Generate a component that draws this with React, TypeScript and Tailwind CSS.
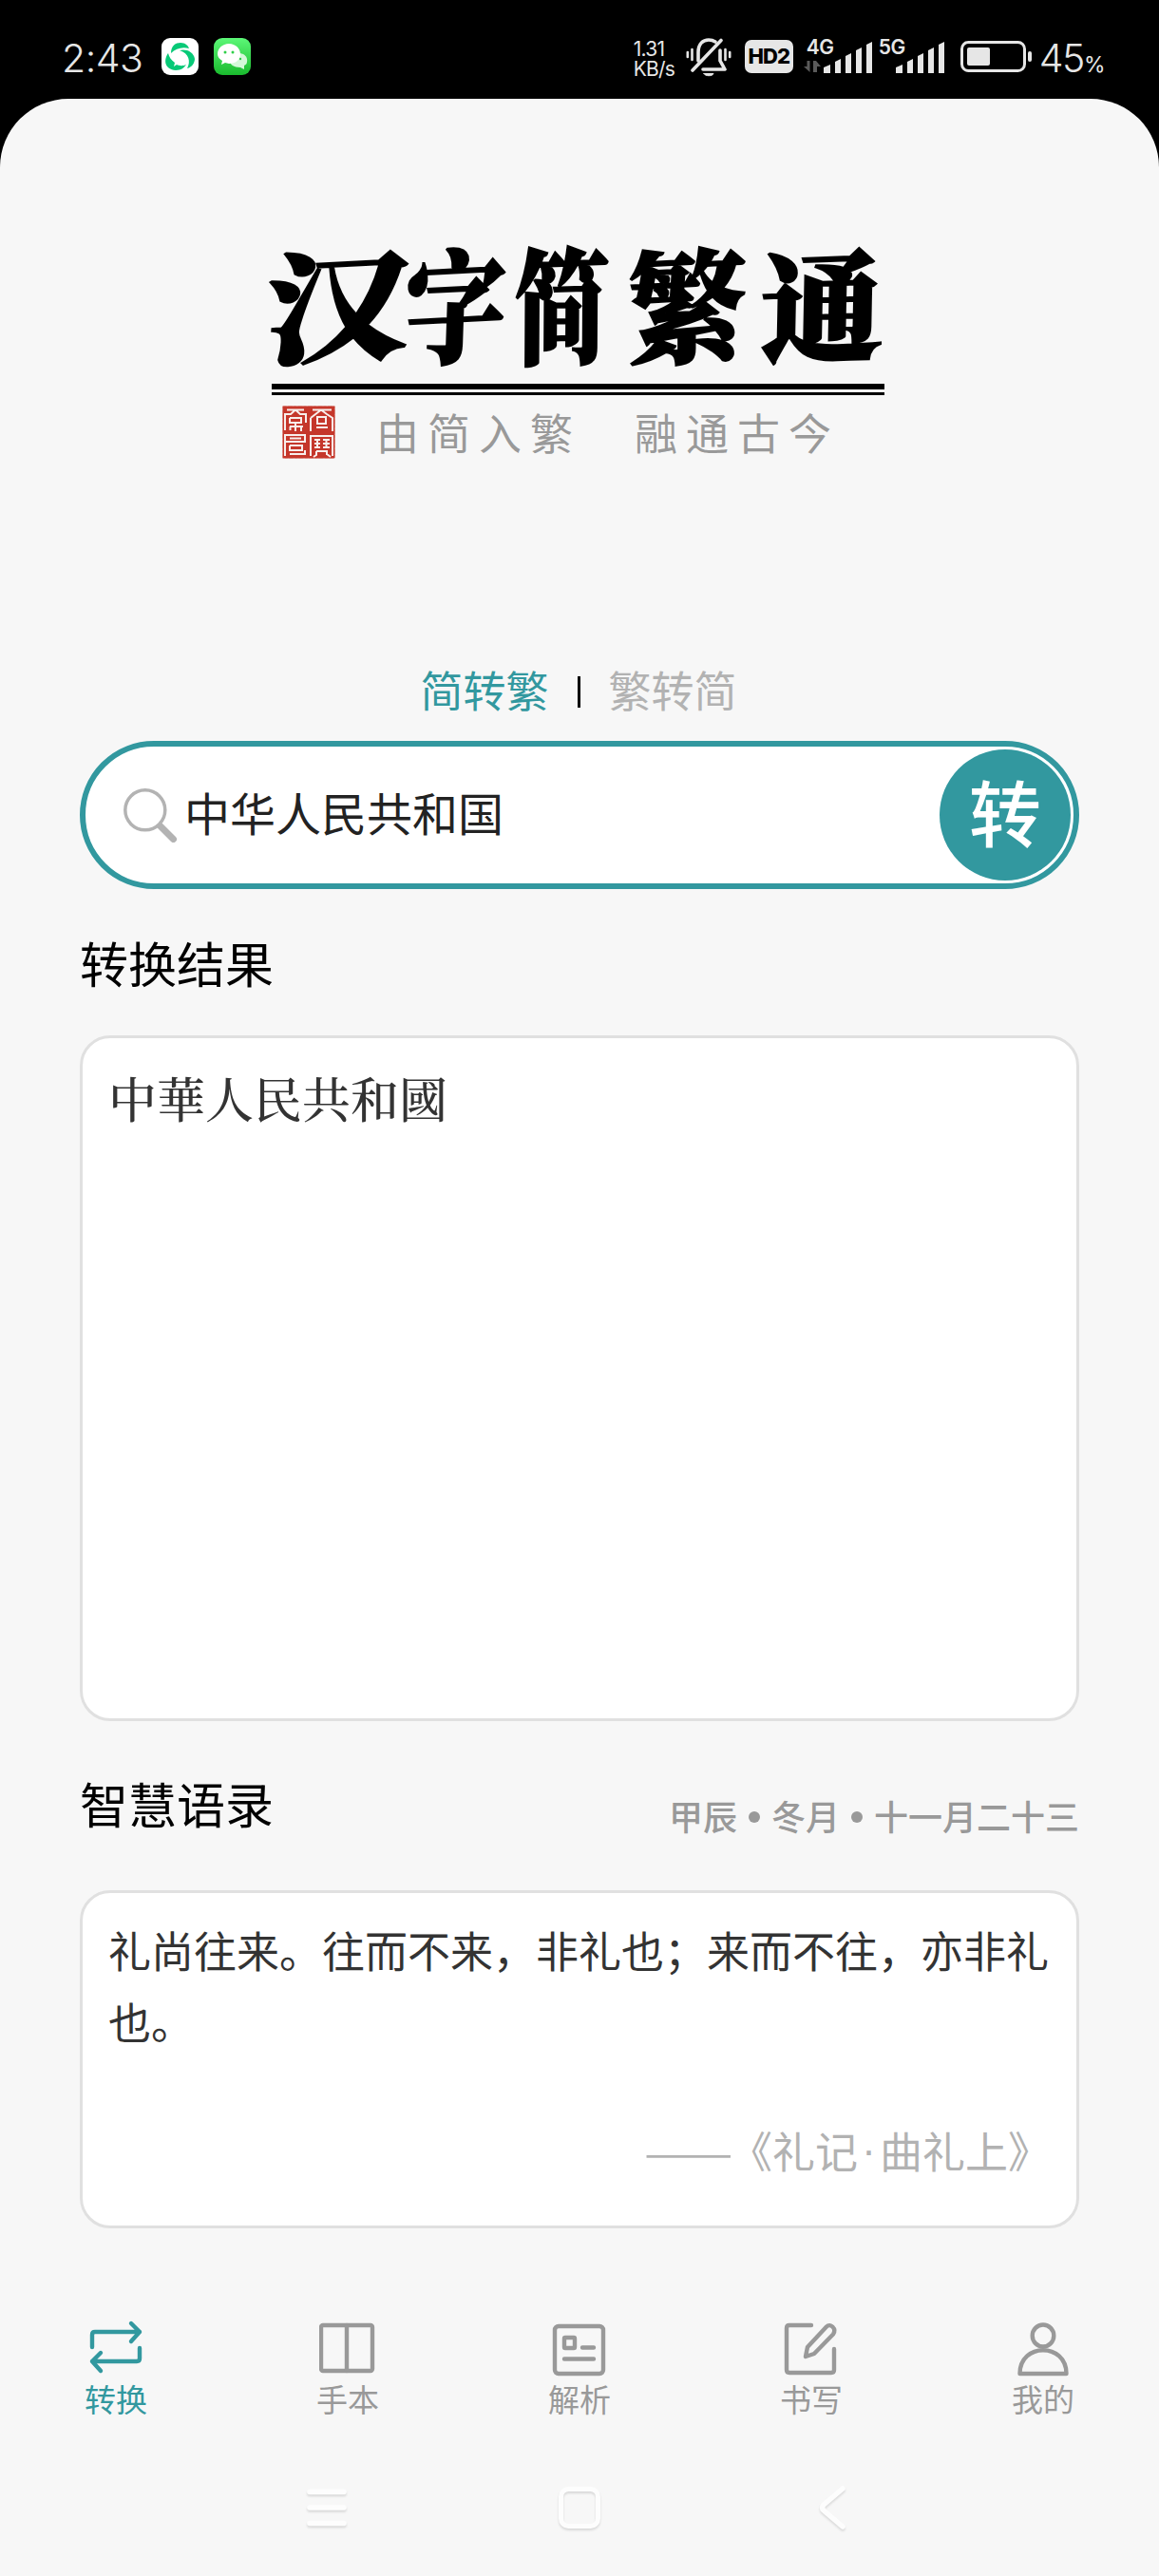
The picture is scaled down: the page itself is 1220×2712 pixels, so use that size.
import type { ReactNode } from "react";

const cjkSans = "font-['Noto_Sans_CJK_SC',sans-serif]";
const cjkSerif = "font-['Noto_Serif_CJK_SC','Noto_Sans_CJK_TC',serif]";

const logoChars = [
  { char: "汉", className: "w-[139px] scale-x-[1.2] -skew-x-6 -rotate-3" },
  { char: "字", className: "w-[110px] scale-x-[0.84] scale-y-[1.02] -skew-x-6 -rotate-3" },
  { char: "简", className: "w-[113px] scale-x-[0.8] scale-y-[1.04] -skew-x-3 -rotate-2" },
  { char: "繁", className: "w-[151px] scale-x-[0.98] scale-y-[1.02] -skew-x-3 -rotate-3" },
  { char: "通", className: "w-[134px] scale-x-[1.03] -skew-x-3 -rotate-2" },
];

function StatusBar() {
  return (
    <header className="flex h-[104px] items-start pt-[40px] pl-[65px] pr-[58px] font-[Inter,sans-serif] text-[#e6e6e6]">
      <span className="w-[105px] pt-px text-[41px] font-[350] leading-[40px] tracking-[-0.5px]">2:43</span>
      <svg className="h-[39px] w-[39px]" viewBox="0 0 39 39">
        <rect width="39" height="39" rx="9" fill="#fff" />
        <path d="M10 16C10 8 15 5 20 5c5 0 8 3 9 6-7-2-14 0-19 5Z" fill="#07c977" />
        <path d="M7 16c-5 7-4 17 8 18 6 0 9-3 11-6-4 2-8 1-10 0l-3 2 1-4c-4-3-6-6-7-10Z" fill="#07c977" />
        <path d="M19 13c6-2 15 1 16 9 0 4-3 9-8 10 4-7 2-16-8-19Z" fill="#07c977" />
      </svg>
      <svg className="ml-[16px] h-[39px] w-[39px]" viewBox="0 0 39 39">
        <defs>
          <linearGradient id="chat" x1="0" y1="0" x2="0" y2="1">
            <stop offset="0" stopColor="#5cf777" />
            <stop offset="1" stopColor="#1abb2e" />
          </linearGradient>
        </defs>
        <rect width="39" height="39" rx="9" fill="url(#chat)" />
        <path d="M26 16c6 0 10 4 9 9 0 2-1 3-3 4v4l-4-2c-7 0-11-3-11-7 0-5 4-8 9-8Z" fill="#d5f8d9" />
        <path d="M16 6c7 0 12 5 12 11s-5 10-12 10l-4-1-4 2 1-4c-3-2-5-4-5-7C4 11 9 6 16 6Z" fill="#fff" />
        <circle cx="12" cy="15" r="1.5" fill="#2fcf48" />
        <circle cx="20" cy="15" r="1.5" fill="#2fcf48" />
        <circle cx="28" cy="22" r="1.2" fill="#2fcf48" />
      </svg>

      <div className="ml-auto flex items-start">
        <div className="w-[55px] pt-px text-[21px] leading-[21px] tracking-[-0.8px]">
          <div>1.31</div>
          <div>KB/s</div>
        </div>
        <svg className="h-[41px] w-[48px]" viewBox="0 0 48 41" fill="none" stroke="#e6e6e6" strokeWidth="3.6" strokeLinecap="round" strokeLinejoin="round">
          <path d="M7 34 37 2.500" />
          <path d="M13 24V15C13 6 18 2 24 2c3 0 5 .7 7 2" />
          <path d="M36 13v11l5 9H18" />
          <path d="M19 37.500h10c-1 3-9 3-10 0Z" fill="#e6e6e6" strokeWidth="1" />
          <path d="M1.800 15v5M6.500 12v11M41.500 12v11M46.200 15v5" strokeWidth="2.600" />
        </svg>
        <span className="ml-[14px] mt-[2px] flex h-[35px] w-[51px] items-center justify-center rounded-[7px] bg-[#e6e6e6] text-[22px] font-extrabold tracking-[-1px] text-black">
          HD2
        </span>
        <SignalBars label="4G" className="ml-[14px] w-[74px]" arrows />
        <SignalBars label="5G" className="ml-[2px] w-[74px]" />
        <svg className="ml-[12px] mt-[3px] h-[34px] w-[77px]" viewBox="0 0 77 34">
          <rect x="1.500" y="1.500" width="66" height="30" rx="7" fill="none" stroke="#e6e6e6" strokeWidth="3" />
          <rect x="7" y="7" width="24" height="19" rx="2" fill="#e6e6e6" />
          <rect x="71" y="11" width="4" height="11" rx="2" fill="#e6e6e6" />
        </svg>
        <span className="ml-[6px] pt-px text-[41px] font-[350] leading-[40px] tracking-[-1.5px]">
          45<span className="text-[23px] font-normal">%</span>
        </span>
      </div>
    </header>
  );
}

function SignalBars({ label, className, arrows = false }: { label: string; className: string; arrows?: boolean }) {
  return (
    <div className={`relative h-[40px] ${className}`}>
      <span className="absolute left-0 top-0 text-[21px] font-semibold leading-[20px] tracking-[-0.5px]">{label}</span>
      <svg className="h-[40px] w-[74px] overflow-visible" viewBox="0 0 74 40" fill="#e6e6e6">
        {arrows && <path d="M3.500 36-3 30h3.500v-6h3ZM7 36V24h3l5 6h-4v6Z" fill="#5a5a5a" />}
        <path d="M18 37v-6l7-3v9Z" />
        <path d="M30 37V25l6-3v15Z" />
        <path d="M41 37V19l6-3v21Z" />
        <path d="M52 37V13l6-3v27Z" />
        <path d="M63 37V7l6-3v33Z" />
      </svg>
    </div>
  );
}

function Seal() {
  return (
    <svg className="h-[56px] w-[56px]" viewBox="0 0 56 56" fill="none">
      <rect x=".5" y=".5" width="55" height="55" rx="1" fill="#c5372b" stroke="#d9847b" strokeDasharray="3 1.500 5 1" />
      <g stroke="#f8efec" strokeWidth="2">
        <path d="M5 4.500h18M14 4.500 9 9H3v17M14 4.500 19 9h6v9M8 13h12v5H8v-5M8 22h14M14 18v9M8.500 22v4M20 22v5" />
        <path d="M32 4.500h20M41 4.500 30 13M41 4.500 47 9l6 4v14M30 13v14M37 12h9v7h-9zM36 23h12" />
        <path d="M3 53V31h21v7H4M8 34.500h12M8 42h13v5H8v-5M8 51h16v-4" />
        <path d="M30 53V32h23v21M34 36h6M34 40h6M34 44h6M37 35v10M43 36h7M43 40h7M43 44h7M46.500 35v10M36 48h11v4M36 48v4l-3 2M47 51l4 3" />
      </g>
    </svg>
  );
}

function Logo() {
  return (
    <div className="mx-auto mt-[142px] w-[648px]">
      <div className={`flex h-[158px] items-start whitespace-nowrap pt-[6px] text-[126px] font-black leading-[128px] [-webkit-text-stroke:2.5px_black] ${cjkSerif}`}>
        {logoChars.map(({ char, className }) => (
          <span key={char} className={`flex justify-center ${className}`}>{char}</span>
        ))}
      </div>
      <div className="h-[6px] w-[645px] bg-black" />
      <div className="mt-[3px] h-[3px] w-[645px] bg-black" />
      <div className="mt-[11px] flex h-[56px] pl-[11px] text-[#999]">
        <Seal />
        <div className="ml-[43px] flex gap-[56px] text-[45px] leading-[56px] tracking-[9px]">
          <span>由简入繁</span>
          <span>融通古今</span>
        </div>
      </div>
    </div>
  );
}

function SearchBox() {
  return (
    <div className="flex h-[156px] items-center rounded-full border-[6px] border-[#32989f] bg-white pl-[40px] pr-[3px]">
      <svg className="h-[58px] w-[58px]" viewBox="0 0 58 58" fill="none" stroke="#b3b3b3" strokeLinecap="round">
        <circle cx="22.800" cy="23.800" r="21" strokeWidth="3.500" />
        <path d="m39 41 13.500 13.500" strokeWidth="7" />
      </svg>
      <span className="ml-[6px] pb-[8px] text-[48px] leading-[60px] text-[#222]">中华人民共和国</span>
      <button className="ml-auto flex h-[138px] w-[138px] items-center justify-center rounded-full bg-[#32989f] pb-[11px] text-[76px] font-medium leading-none text-white">
        转
      </button>
    </div>
  );
}

function TabItem({ label, active = false, children }: { label: string; active?: boolean; children: ReactNode }) {
  return (
    <div className={`flex w-[244px] flex-col items-center ${active ? "text-[#32989f]" : "text-[#999]"}`}>
      <svg className="h-[60px] w-[60px]" viewBox="0 0 60 60" fill="none" stroke="currentColor" strokeWidth="4.400" strokeLinecap="round" strokeLinejoin="round">
        {children}
      </svg>
      <span className="mt-[3px] text-[33px] leading-[40px]">{label}</span>
    </div>
  );
}

function TabBar() {
  return (
    <nav className="mt-[96px] flex">
      <TabItem label="转换" active>
        <path d="M5 29V16q0-3 3-3h47M46 4l9 9-9 10" />
        <path d="M55 30v11q0 3-3 3H5M14 35l-9 9 9 10" />
      </TabItem>
      <TabItem label="手本">
        <rect x="2" y="6" width="54" height="48" rx="2" />
        <path d="M29 6v48" />
      </TabItem>
      <TabItem label="解析">
        <rect x="4" y="7" width="51" height="50" rx="4" />
        <rect x="14" y="19" width="11" height="11" rx="1" />
        <path d="M33 29.500h12M14 41.500h31" />
      </TabItem>
      <TabItem label="书写">
        <path d="M30 6H7q-3 0-3 3v44q0 3 3 3h44q3 0 3-3V31" />
        <path d="M24 39l2-10L46 7.500c4-4 11 2 7 8L33 36Z" />
      </TabItem>
      <TabItem label="我的">
        <ellipse cx="30" cy="17" rx="11.300" ry="11.500" />
        <path d="M5.500 57c0-33 49-33 49 0Z" />
      </TabItem>
    </nav>
  );
}

function SystemNav() {
  return (
    <div className="mt-[63px] flex h-[64px] items-center pl-[316px] drop-shadow-[0_2px_1px_rgba(0,0,0,0.12)]">
      <svg className="h-[56px] w-[56px]" viewBox="0 0 56 56" fill="none" stroke="#fdfdfd" strokeWidth="5.500" strokeLinecap="round">
        <path d="M10 11.500h36M10 28h36M10 44.500h36" />
      </svg>
      <svg className="ml-[210px] h-[56px] w-[56px]" viewBox="0 0 56 56" fill="none" stroke="#fdfdfd" strokeWidth="5">
        <rect x="8.500" y="8.500" width="39" height="39" rx="8" />
      </svg>
      <svg className="ml-[212px] h-[56px] w-[56px]" viewBox="0 0 56 56" fill="none" stroke="#fdfdfd" strokeWidth="5.500" strokeLinecap="round" strokeLinejoin="round">
        <path d="M37 8 17 25q-3 3 0 6l20 17" />
      </svg>
    </div>
  );
}

export default function App() {
  return (
    <div className={`h-[2712px] w-[1220px] overflow-hidden bg-black ${cjkSans}`}>
      <StatusBar />
      <div className="h-[2608px] overflow-hidden rounded-t-[72px] bg-[#f7f7f7]">
        <Logo />

        <main className="mt-[215px] px-[84px]">
          <div className="flex h-[60px] items-center justify-center pr-[2px] text-[45px] leading-[60px]">
            <span className="-mt-[5px] text-[#32989f]">简转繁</span>
            <span className="mx-[30px] h-[33px] w-[3px] bg-black" />
            <span className="-mt-[5px] text-[#b2b2b2]">繁转简</span>
          </div>
          <div className="mt-[22px]">
            <SearchBox />
          </div>

          <h2 className="mt-[47px] text-[51px] leading-[60px]">转换结果</h2>
          <section className={`mt-[47px] h-[722px] rounded-[32px] border-[3px] border-[#e0e0e0] bg-white px-[27px] pt-[32px] text-[51px] font-medium leading-[60px] text-[#333] ${cjkSerif}`}>
            中華人民共和國
          </section>

          <div className="mt-[55px] flex items-center justify-between">
            <h2 className="text-[51px] leading-[60px]">智慧语录</h2>
            <div className="flex items-center pt-[26px] text-[36px] font-medium leading-[36px] text-[#999]">
              <span>甲辰</span>
              <i className="mx-[12px] mt-[4px] size-[12px] rounded-full bg-[#999]" />
              <span>冬月</span>
              <i className="mx-[12px] mt-[4px] size-[12px] rounded-full bg-[#999]" />
              <span>十一月二十三</span>
            </div>
          </div>
          <section className="mt-[61px] h-[356px] rounded-[32px] border-[3px] border-[#e0e0e0] bg-white px-[27px] pt-[22px] text-[45px] leading-[75px]">
            <p className="text-[#333]">
              礼尚往来。往而不来，非礼也；来而不往，亦非礼
              <br />
              也。
            </p>
            <p className="mt-[61px] flex justify-end whitespace-nowrap text-[#b2b2b2]">
              <span className="origin-right scale-x-[1.24]">——</span>
              <span className="-ml-[3px]">《礼记</span>
              <span className="w-[23px] text-center font-['Liberation_Sans',sans-serif]">·</span>
              <span>曲礼上》</span>
            </p>
          </section>
        </main>

        <TabBar />
        <SystemNav />
      </div>
    </div>
  );
}
